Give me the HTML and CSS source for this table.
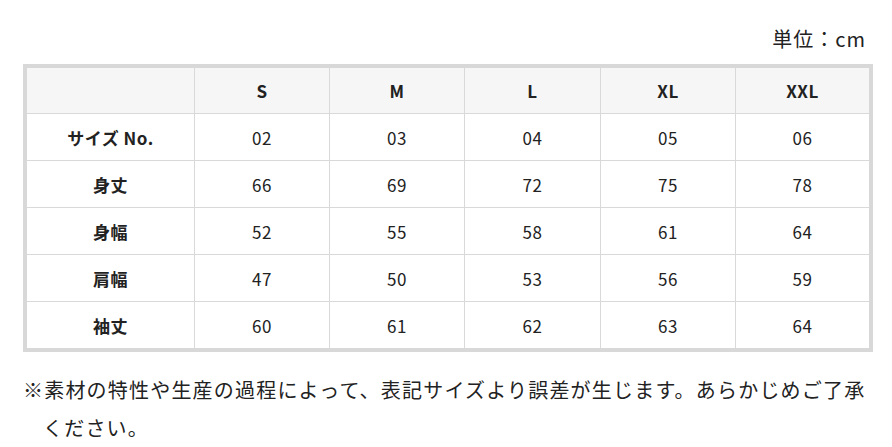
FILE: index.html
```html
<!DOCTYPE html>
<html lang="ja">
<head>
<meta charset="utf-8">
<title>サイズ表</title>
<link rel="stylesheet" href="styles.css">
</head>
<body>
<div class="wrap">
  <p class="unit">単位：cm</p>
  <table class="size-table">
    <colgroup>
      <col class="c-label">
      <col class="c-s">
      <col class="c-m">
      <col class="c-l">
      <col class="c-xl">
      <col class="c-xxl">
    </colgroup>
    <thead>
      <tr><th></th><th>S</th><th>M</th><th>L</th><th>XL</th><th>XXL</th></tr>
    </thead>
    <tbody>
      <tr><th>サイズ No.</th><td>02</td><td>03</td><td>04</td><td>05</td><td>06</td></tr>
      <tr><th>身丈</th><td>66</td><td>69</td><td>72</td><td>75</td><td>78</td></tr>
      <tr><th>身幅</th><td>52</td><td>55</td><td>58</td><td>61</td><td>64</td></tr>
      <tr><th>肩幅</th><td>47</td><td>50</td><td>53</td><td>56</td><td>59</td></tr>
      <tr><th>袖丈</th><td>60</td><td>61</td><td>62</td><td>63</td><td>64</td></tr>
    </tbody>
  </table>
  <p class="note">※素材の特性や生産の過程によって、表記サイズより誤差が生じます。あらかじめご了承ください。</p>
</div>
</body>
</html>
```

FILE: styles.css
```css
html, body {
  margin: 0;
  padding: 0;
  background: #ffffff;
}
body {
  font-family: "Noto Sans CJK JP", "Noto Sans", sans-serif;
  color: #222222;
}
.wrap {
  padding: 0 19px 0 23px;
}
.unit {
  margin: 25px 0 0 0;
  padding-right: 7px;
  text-align: right;
  font-size: 20px;
  line-height: 27px;
  letter-spacing: 1px;
}
.size-table {
  margin-top: 12px;
  width: 850px;
  table-layout: fixed;
  border-collapse: separate;
  border-spacing: 0;
  border: 4px solid #d8d8d8;
}
.c-label { width: 168px; }
.c-s, .c-m, .c-xl { width: 135px; }
.c-l { width: 136px; }
.c-xxl { width: 133px; }
.size-table th,
.size-table td {
  padding: 0;
  text-align: center;
  font-size: 17px;
  letter-spacing: 0.5px;
  border-right: 1px solid #d9d9d9;
  border-bottom: 1px solid #d9d9d9;
  height: 46px;
}
.size-table th { font-weight: 700; }
.size-table td { font-weight: 400; }
.size-table tr > :last-child { border-right: none; }
.size-table tbody tr:last-child > * { border-bottom: none; }
.size-table thead th {
  background: #f6f6f6;
  height: 45px;
}
.note {
  margin: 19px 0 0 0;
  padding-left: 20px;
  text-indent: -20px;
  font-size: 20px;
  line-height: 38px;
  letter-spacing: 1.2px;
}
```
